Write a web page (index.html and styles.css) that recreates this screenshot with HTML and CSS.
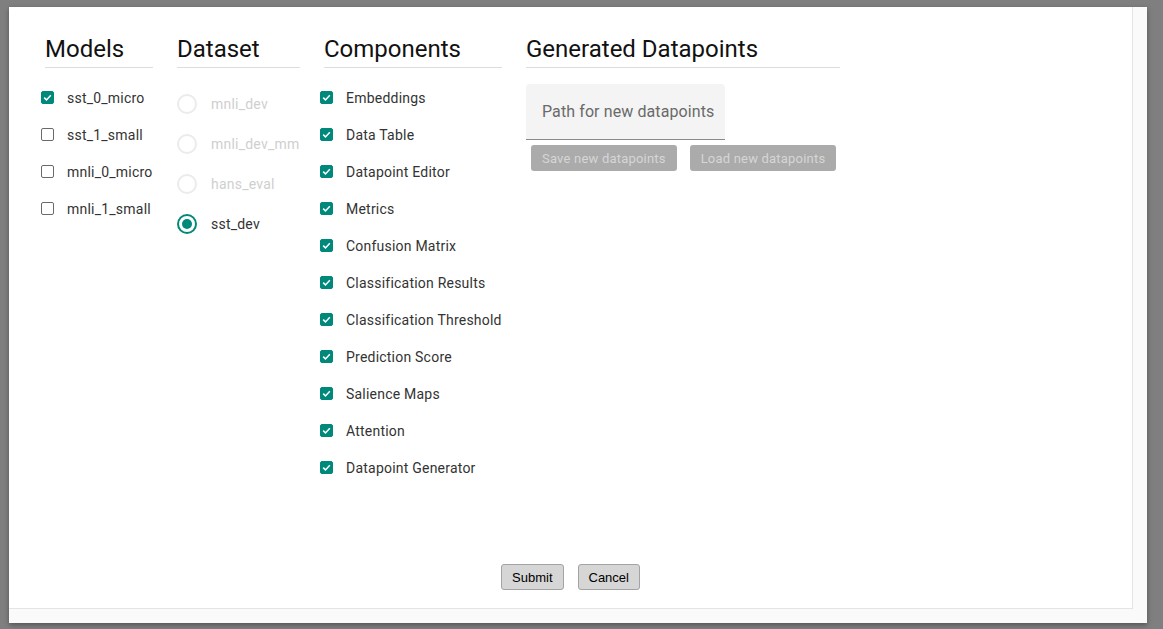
FILE: index.html
```html
<!DOCTYPE html>
<html lang="en">
<head>
<meta charset="utf-8">
<title>Global settings</title>
<link rel="stylesheet" href="styles.css">
</head>
<body>
<div class="backdrop">
  <div class="dialog">
    <div class="content">
      <div class="columns">
        <section class="col col-models">
          <h2 class="col-title">Models</h2>
          <div class="list checks">
            <label class="row"><span class="cb on"><svg viewBox="0 0 13 13"><path d="M3.2 6.6l2.3 2.3 4.3-4.6"/></svg></span><span class="lbl">sst_0_micro</span></label>
            <label class="row"><span class="cb"></span><span class="lbl">sst_1_small</span></label>
            <label class="row"><span class="cb"></span><span class="lbl">mnli_0_micro</span></label>
            <label class="row"><span class="cb"></span><span class="lbl">mnli_1_small</span></label>
          </div>
        </section>
        <section class="col col-dataset">
          <h2 class="col-title">Dataset</h2>
          <div class="list radios">
            <label class="rrow disabled"><span class="rb"></span><span class="lbl">mnli_dev</span></label>
            <label class="rrow disabled"><span class="rb"></span><span class="lbl">mnli_dev_mm</span></label>
            <label class="rrow disabled"><span class="rb"></span><span class="lbl">hans_eval</span></label>
            <label class="rrow"><span class="rb on"></span><span class="lbl">sst_dev</span></label>
          </div>
        </section>
        <section class="col col-components">
          <h2 class="col-title">Components</h2>
          <div class="list checks">
            <label class="row"><span class="cb on"><svg viewBox="0 0 13 13"><path d="M3.2 6.6l2.3 2.3 4.3-4.6"/></svg></span><span class="lbl">Embeddings</span></label>
            <label class="row"><span class="cb on"><svg viewBox="0 0 13 13"><path d="M3.2 6.6l2.3 2.3 4.3-4.6"/></svg></span><span class="lbl">Data Table</span></label>
            <label class="row"><span class="cb on"><svg viewBox="0 0 13 13"><path d="M3.2 6.6l2.3 2.3 4.3-4.6"/></svg></span><span class="lbl">Datapoint Editor</span></label>
            <label class="row"><span class="cb on"><svg viewBox="0 0 13 13"><path d="M3.2 6.6l2.3 2.3 4.3-4.6"/></svg></span><span class="lbl">Metrics</span></label>
            <label class="row"><span class="cb on"><svg viewBox="0 0 13 13"><path d="M3.2 6.6l2.3 2.3 4.3-4.6"/></svg></span><span class="lbl">Confusion Matrix</span></label>
            <label class="row"><span class="cb on"><svg viewBox="0 0 13 13"><path d="M3.2 6.6l2.3 2.3 4.3-4.6"/></svg></span><span class="lbl">Classification Results</span></label>
            <label class="row"><span class="cb on"><svg viewBox="0 0 13 13"><path d="M3.2 6.6l2.3 2.3 4.3-4.6"/></svg></span><span class="lbl">Classification Threshold</span></label>
            <label class="row"><span class="cb on"><svg viewBox="0 0 13 13"><path d="M3.2 6.6l2.3 2.3 4.3-4.6"/></svg></span><span class="lbl">Prediction Score</span></label>
            <label class="row"><span class="cb on"><svg viewBox="0 0 13 13"><path d="M3.2 6.6l2.3 2.3 4.3-4.6"/></svg></span><span class="lbl">Salience Maps</span></label>
            <label class="row"><span class="cb on"><svg viewBox="0 0 13 13"><path d="M3.2 6.6l2.3 2.3 4.3-4.6"/></svg></span><span class="lbl">Attention</span></label>
            <label class="row"><span class="cb on"><svg viewBox="0 0 13 13"><path d="M3.2 6.6l2.3 2.3 4.3-4.6"/></svg></span><span class="lbl">Datapoint Generator</span></label>
          </div>
        </section>
        <section class="col col-generated">
          <h2 class="col-title">Generated Datapoints</h2>
          <div class="gen">
            <div class="field"><span class="placeholder">Path for new datapoints</span></div>
            <div class="gen-buttons">
              <button class="gbtn" disabled>Save new datapoints</button>
              <button class="gbtn" disabled>Load new datapoints</button>
            </div>
          </div>
        </section>
      </div>
      <div class="footer">
        <button class="btn">Submit</button>
        <button class="btn">Cancel</button>
      </div>
    </div>
  </div>
</div>
</body>
</html>
```
FILE: styles.css
```css
html, body {
  margin: 0;
  padding: 0;
  width: 1163px;
  height: 629px;
  overflow: hidden;
  background: #7f7f7f;
}

.backdrop {
  width: 1163px;
  height: 629px;
  box-sizing: border-box;
  padding: 7px 0 0 9px;
  background: #7f7f7f;
}

.dialog {
  width: 1138px;
  height: 616px;
  background: #fafafa;
  box-shadow: 0 2px 5px rgba(0, 0, 0, 0.35);
}

.content {
  width: 1124px;
  height: 602px;
  box-sizing: border-box;
  background: #ffffff;
  border-right: 1px solid #e4e4e4;
  border-bottom: 1px solid #e4e4e4;
  display: flex;
  flex-direction: column;
  font-family: Roboto, "Noto Sans", sans-serif;
}

.columns {
  display: flex;
  gap: 24px;
  padding: 28px 0 0 36px;
}

.col {
  flex: none;
}

.col-models { width: 108px; }
.col-dataset { width: 123px; overflow: hidden; }
.col-components { width: 178px; }
.col-generated { width: 314px; }

.col-title {
  margin: 0;
  font-size: 24px;
  font-weight: 400;
  line-height: 28px;
  color: #111;
  padding: 0 0 4px 0;
  border-bottom: 1px solid #dddddd;
  white-space: nowrap;
}

.list {
  display: flex;
  flex-direction: column;
}

.checks {
  padding-top: 11px;
  margin-left: -4px;
}

.row {
  height: 37px;
  display: flex;
  align-items: center;
  white-space: nowrap;
}

.cb {
  flex: none;
  width: 13px;
  height: 13px;
  box-sizing: border-box;
  border: 1.5px solid #6a6a6a;
  border-radius: 2px;
  margin-right: 13px;
  display: flex;
  align-items: center;
  justify-content: center;
}

.cb.on {
  background: #00897b;
  border-color: #00897b;
}

.cb svg {
  width: 13px;
  height: 13px;
  flex: none;
}

.cb svg path {
  fill: none;
  stroke: #ffffff;
  stroke-width: 1.5;
}

.lbl {
  font-size: 14px;
  color: #333333;
  letter-spacing: 0.22px;
}

.radios {
  padding-top: 16px;
}

.rrow {
  height: 40px;
  display: flex;
  align-items: center;
  white-space: nowrap;
}

.rb {
  flex: none;
  width: 20px;
  height: 20px;
  box-sizing: border-box;
  border: 2px solid #00897b;
  border-radius: 50%;
  margin-right: 14px;
  display: flex;
  align-items: center;
  justify-content: center;
}

.rb.on::after {
  content: "";
  width: 10px;
  height: 10px;
  border-radius: 50%;
  background: #00897b;
}

.rrow.disabled .rb {
  border-color: #ebebeb;
}

.rrow.disabled .lbl {
  color: #cfcfcf;
}

.gen {
  padding-top: 16px;
}

.field {
  width: 199px;
  height: 56px;
  box-sizing: border-box;
  background: #f4f4f4;
  border-radius: 4px 4px 0 0;
  border-bottom: 1px solid #8a8a8a;
  display: flex;
  align-items: center;
  padding: 0 0 1px 16px;
}

.placeholder {
  font-size: 16px;
  color: #6a6a6a;
  white-space: nowrap;
  letter-spacing: 0.1px;
}

.gen-buttons {
  display: flex;
  gap: 13px;
  margin: 5px 0 0 5px;
}

.gbtn {
  height: 26px;
  padding: 0 11px;
  border: none;
  border-radius: 3px;
  background: #ababab;
  color: #d6d6d6;
  font-family: Roboto, "Noto Sans", sans-serif;
  font-size: 13px;
  letter-spacing: 0.2px;
  white-space: nowrap;
}

.footer {
  margin-top: auto;
  display: flex;
  justify-content: center;
  gap: 14px;
  padding: 0 0 18px 0;
}

.btn {
  height: 26px;
  padding: 0 10px;
  background: #d6d6d6;
  border: 1px solid #a3a3a3;
  border-radius: 3px;
  color: #000000;
  font-family: "Liberation Sans", Arial, sans-serif;
  font-size: 13px;
}
```
